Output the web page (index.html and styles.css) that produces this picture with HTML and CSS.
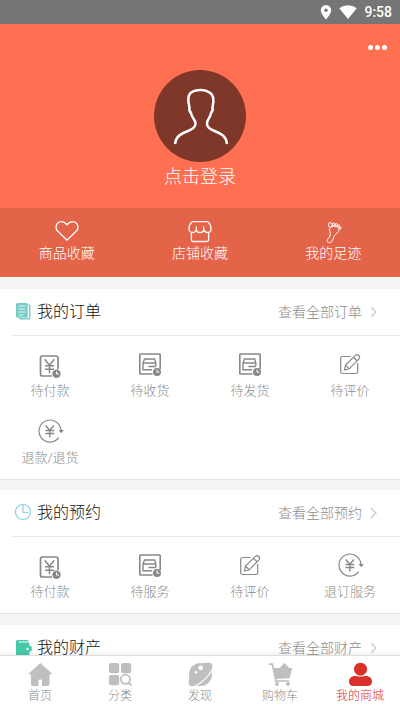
FILE: index.html
```html
<!DOCTYPE html>
<html lang="zh-CN">
<head>
<meta charset="utf-8">
<meta name="viewport" content="width=device-width, initial-scale=1">
<title>我的商城</title>
<link rel="stylesheet" href="styles.css">
</head>
<body>
<svg class="sprite" aria-hidden="true">
  <symbol id="i-pay" viewBox="0 0 28 28">
    <path d="M16 24H6.500a2 2 0 0 1-2-2V6a2 2 0 0 1 2-2h13.500a2 2 0 0 1 2 2v11" stroke-width="1.700"/>
    <path d="M8.800 7.200l4.700 6 4.700-6M13.500 13.200v8M9 13.700h9M9 17.200h9" stroke-width="1.500"/>
    <circle cx="20.500" cy="21.800" r="4.200" class="solid"/>
    <path d="M20.500 19.300v2.700h2.500" class="cut"/>
  </symbol>
  <symbol id="i-box" viewBox="0 0 28 28">
    <path d="M16.500 22H4.500a.7.700 0 0 1-.7-.7V2.700A.7.700 0 0 1 4.500 2h19a.7.700 0 0 1 .7.700V17" stroke-width="1.600"/>
    <path d="M19.800 14.500V11L18.700 7H8.600L7 11v6.700h9M7 11h12.800M12.500 14.500h7.300" stroke-width="1.400"/>
    <circle cx="21" cy="20" r="4" class="solid"/>
    <path d="M21 17.500v2.700h2.300" class="cut"/>
  </symbol>
  <symbol id="i-edit" viewBox="0 0 28 28">
    <path d="M14.500 4.500H6.500a1.800 1.800 0 0 0-1.800 1.800v13.400a1.800 1.800 0 0 0 1.800 1.800h13.400a1.800 1.800 0 0 0 1.800-1.800V11"/>
    <path d="M8.500 18l1-5L19.200 3.600a2.400 2.400 0 0 1 3.600 3.500L13.200 16.800zM17.500 5.300l3.600 3.500M9.500 13l3.700 3.800"/>
  </symbol>
  <symbol id="i-refund" viewBox="0 0 28 28">
    <path d="M25 11.500A11 11 0 1 0 22.800 18.700"/>
    <path d="M22.500 11h5.400l-2.700 3.200z" class="solid"/>
    <path d="M9.600 6.500l4.200 4.700L18 6.500M13.800 11v7.500M9.400 11.500h8.800M9.400 14.500h8.800" stroke-width="1.400"/>
  </symbol>
  <symbol id="i-chevron" viewBox="0 0 8 12"><path d="M1 1l5 5-5 5"/></symbol>
</svg>

<div class="app">
  <div class="status">
    <svg width="12" height="16" viewBox="0 0 12 16"><path fill="#fff" fill-rule="evenodd" d="M6 1a5.200 5.200 0 0 0-5.200 5.200C.8 10 6 15.500 6 15.500s5.200-5.500 5.200-9.300A5.200 5.200 0 0 0 6 1zm0 3.400a1.800 1.800 0 1 1 0 3.600 1.800 1.800 0 0 1 0-3.600z"/></svg>
    <svg width="18" height="16" viewBox="0 0 18 16"><path fill="#fff" d="M9 15L.3 4.300A14 14 0 0 1 9 1.200a14 14 0 0 1 8.700 3.100z"/></svg>
    <span>9:58</span>
  </div>

  <main class="content">
    <header class="hero">
      <div class="topbar">
        <button class="more" type="button" aria-label="更多"><i></i><i></i><i></i></button>
      </div>
      <a class="login" href="#">
        <span class="avatar">
          <svg viewBox="0 0 92 92"><path d="M21 74C22 66 27 63.500 34 61C39.500 58.500 41.500 57 41.500 53.500C41.500 49 37.500 48 37 43C35 41 35 39.500 35.500 37.500C34 32 33.500 27 36 23.500C39 20.500 43 20 47 20C51 20 53 20.700 55.500 22.500C60 24.500 60 31 58.500 37.500C59 39.500 59 41 57 43C56.500 48 53 49 53 53.500C53 57 55 58.500 60.500 61C67 63.500 72 66 73 74"/></svg>
        </span>
        <span class="login-text">点击登录</span>
      </a>
      <nav class="shortcuts">
        <a href="#">
          <svg viewBox="0 0 24 24"><path d="M12 21.200L2.600 12A5.600 5.600 0 0 1 1 8.200C1 5 3.400 2.700 6.300 2.700c2.500 0 4.200 1.200 5.700 3.200 1.500-2 3.200-3.200 5.700-3.200 2.900 0 5.300 2.300 5.300 5.500a5.600 5.600 0 0 1-1.600 3.800z"/></svg>
          <span>商品收藏</span>
        </a>
        <a href="#">
          <svg viewBox="0 0 24 24"><path d="M4.500 2.600h15c2.300 1.800 3.500 4.500 3.500 7.400 0 2.300-1.600 3.500-3.600 3.500s-3.700-1.500-3.700-3.500V7.500M15.700 10c0 2-1.600 3.500-3.700 3.500S8.300 12 8.300 10V7.500M8.300 10c0 2-1.700 3.500-3.700 3.500S1 12.300 1 10c0-2.900 1.200-5.600 3.500-7.400M3.400 13.500V21a1.500 1.500 0 0 0 1.500 1.500h14.200a1.500 1.500 0 0 0 1.500-1.500v-7.500"/></svg>
          <span>店铺收藏</span>
        </a>
        <a href="#">
          <svg viewBox="0 0 24 24" class="thin"><path d="M8.700 9.300C7.500 11.500 10.500 14 9 17c-1.700 3-3.500 3.800-2.500 5.800 1 1.500 3.500 1.200 4.800-1 1.500-2.500 1-4.800 3.600-6.700 2.300-1.700 3.600-3.300 2.900-5.600-.7-2.200-6.500-3.700-9.100-.2z"/><ellipse cx="9.300" cy="5.800" rx="1.900" ry="2.300"/><circle cx="12.500" cy="5.300" r="1.300"/><circle cx="15.200" cy="5.800" r="1.200"/><circle cx="17.500" cy="7" r="1.100"/><circle cx="19.200" cy="9" r="1"/></svg>
          <span>我的足迹</span>
        </a>
      </nav>
    </header>

    <section class="panel">
      <div class="panel-head">
        <svg class="mark" viewBox="0 0 22 22"><path fill="#78cbc6" d="M5.500 2h9a1.200 1.200 0 0 1 1.200 1.200v13.300H5.500A1.500 1.500 0 0 1 4 15V3.500A1.500 1.500 0 0 1 5.500 2z"/><path d="M16.300 4h.5a1 1 0 0 1 1 1v11.700a1 1 0 0 1-1 1H8.500a1.500 1.500 0 0 1-1.500-1" fill="none" stroke="#78cbc6" stroke-width="1.400"/><path d="M6.500 5h7M6.500 8h7M6.500 11h7M6.500 14h5" stroke="#e2f7f5"/></svg>
        <h2>我的订单</h2>
        <a href="#">查看全部订单<svg class="chevron"><use href="#i-chevron"/></svg></a>
      </div>
      <div class="grid">
        <a href="#"><svg><use href="#i-pay"/></svg><span>待付款</span></a>
        <a href="#"><svg><use href="#i-box"/></svg><span>待收货</span></a>
        <a href="#"><svg><use href="#i-box"/></svg><span>待发货</span></a>
        <a href="#"><svg><use href="#i-edit"/></svg><span>待评价</span></a>
        <a href="#"><svg><use href="#i-refund"/></svg><span>退款/退货</span></a>
      </div>
    </section>

    <section class="panel">
      <div class="panel-head">
        <svg class="mark" viewBox="0 0 22 22"><circle cx="11" cy="10" r="7.500" fill="none" stroke="#8dd0e4" stroke-width="1.200"/><path d="M11 2.500v8h5.500" fill="none" stroke="#8dd0e4" stroke-width="1.200"/></svg>
        <h2>我的预约</h2>
        <a href="#">查看全部预约<svg class="chevron"><use href="#i-chevron"/></svg></a>
      </div>
      <div class="grid">
        <a href="#"><svg><use href="#i-pay"/></svg><span>待付款</span></a>
        <a href="#"><svg><use href="#i-box"/></svg><span>待服务</span></a>
        <a href="#"><svg><use href="#i-edit"/></svg><span>待评价</span></a>
        <a href="#"><svg><use href="#i-refund"/></svg><span>退订服务</span></a>
      </div>
    </section>

    <section class="panel">
      <div class="panel-head">
        <svg class="mark" viewBox="0 0 22 22"><path fill="#45c9a9" d="M5.500 3H15a1.500 1.500 0 0 1 1.500 1v1.500a1.500 1.500 0 0 1 1 1.500v2h1.200a1 1 0 0 1 1 1v3.500a1 1 0 0 1-1 1h-1.200V17a1.500 1.500 0 0 1-1.500 1.500H5.500A1.500 1.500 0 0 1 4 17V4.500A1.500 1.500 0 0 1 5.500 3z"/><path d="M6.500 5h10" stroke="#fff"/><circle cx="15.500" cy="12" r="1.200" fill="#fff"/></svg>
        <h2>我的财产</h2>
        <a href="#">查看全部财产<svg class="chevron"><use href="#i-chevron"/></svg></a>
      </div>
    </section>
  </main>

  <nav class="tabs">
    <a href="#">
      <svg viewBox="0 0 24 24"><path d="M12.300 1L24 11.500c.3.500 0 .8-.5.800H21.500V22a2 2 0 0 1-2 2H14v-5.500a1 1 0 0 0-1-1h-1.500a1 1 0 0 0-1 1V24h-5.500a2 2 0 0 1-2-2v-9.700H1.200c-.6 0-.8-.4-.5-.8z"/></svg>
      <span>首页</span>
    </a>
    <a href="#">
      <svg viewBox="0 0 24 24"><rect x="1" y="1" width="10.200" height="10.200" rx="2"/><rect x="13" y="1" width="10.200" height="10.200" rx="2"/><rect x="1" y="13" width="10.200" height="10.200" rx="2"/><circle cx="17.400" cy="17.300" r="4.600" fill="none" stroke="#bfbfbf" stroke-width="1.800"/><path d="M20.700 20.700l2.800 2.800" stroke="#bfbfbf" stroke-width="2"/></svg>
      <span>分类</span>
    </a>
    <a href="#">
      <svg viewBox="0 0 24 24"><circle cx="12.500" cy="12.500" r="11.500"/><path d="M15 1.300C19 .6 22.500.8 23.500 1.500S24.500 6 23.500 10zM1.500 15C.3 19 .5 22.500 1.500 23.500S6 24.500 10 23.500z"/><path d="M24.500 7.500C20.500 14.500 14 21 6 24.500" fill="none" stroke="#fff" stroke-width="1.300"/><circle cx="12.800" cy="5.800" r="2.400" fill="#fff"/><circle cx="7.800" cy="10.200" r="1.300" fill="#fff"/></svg>
      <span>发现</span>
    </a>
    <a href="#">
      <svg viewBox="0 0 24 24"><path d="M1 2.200h3.300l3.300 14.800v2h13.600" fill="none" stroke="#bfbfbf" stroke-width="1.700"/><path d="M5.300 6H11.500L16.300 1l5 5h2.900l-2.700 10.200L7.500 17z"/><circle cx="9" cy="22" r="2"/><circle cx="20" cy="22" r="2"/></svg>
      <span>购物车</span>
    </a>
    <a href="#" class="active" aria-current="page">
      <svg viewBox="0 0 24 24"><circle cx="12.500" cy="7.200" r="6.500"/><path d="M7 14c1.500 0 3 .7 5.500.7S16.500 14 18 14c3.500 0 6 2.300 6 5.500S22 24 19.500 24h-14C3 24 1 22.700 1 19.500S3.500 14 7 14z"/></svg>
      <span>我的商城</span>
    </a>
  </nav>
</div>
</body>
</html>
```
FILE: styles.css
```css
* { box-sizing: border-box; }

body {
  margin: 0;
  font-family: Roboto, "Noto Sans CJK SC", sans-serif;
  font-weight: 300;
  color: #8c8c8c;
}

a { color: inherit; text-decoration: none; }
svg { display: block; flex: none; overflow: visible; }

.sprite { position: absolute; width: 0; height: 0; }

.app {
  display: flex;
  flex-direction: column;
  height: 100vh;
  background: #f4f4f4;
}

.status {
  display: flex;
  flex: none;
  align-items: center;
  justify-content: flex-end;
  gap: 7px;
  height: 24px;
  padding-right: 8px;
  background: #757575;
  color: #fff;
  font-size: 14px;
  font-weight: 500;
}

.content {
  flex: 1;
  min-height: 0;
  overflow-y: auto;
  scrollbar-width: none;
}

.hero {
  background: #ff7053;
  color: #fff;
}

.topbar {
  display: flex;
  align-items: center;
  justify-content: flex-end;
  height: 46px;
  padding-right: 12px;
}

.more {
  display: flex;
  gap: 2px;
  padding: 8px 1px;
  border: 0;
  background: none;
}

.more i {
  width: 5px;
  height: 5px;
  border-radius: 50%;
  background: #fff;
}

.login {
  display: flex;
  flex-direction: column;
  align-items: center;
  padding-bottom: 16px;
}

.avatar {
  width: 92px;
  height: 92px;
  border-radius: 50%;
  background: #7f372a;
}

.avatar svg {
  fill: none;
  stroke: #fff;
  stroke-width: 2.5;
}

.login-text {
  font-size: 18px;
  line-height: 30px;
}

.shortcuts {
  display: grid;
  grid-template-columns: repeat(3, 1fr);
  background: #e4644a;
}

.shortcuts a {
  display: flex;
  flex-direction: column;
  align-items: center;
  padding: 11px 0 14px;
  font-size: 14px;
  line-height: 20px;
}

.shortcuts svg {
  width: 24px;
  height: 24px;
  fill: none;
  stroke: #fff;
  stroke-width: 1.3;
}

.shortcuts .thin { stroke-width: 1; }

.panel {
  margin-top: 10px;
  background: #fff;
  border-bottom: 1px solid #e4e4e4;
}

.hero + .panel { margin-top: 12px; }
.panel:last-child { margin-top: 11px; }

.panel-head {
  display: flex;
  align-items: center;
  height: 47px;
  margin-left: 12px;
  padding-right: 22px;
  border-bottom: 1px solid #e9e9e9;
}

.mark {
  width: 22px;
  height: 22px;
  margin-right: 3px;
}

.panel-head h2 {
  margin: 0;
  color: #111;
  font-size: 16px;
  font-weight: 300;
  line-height: 24px;
}

.panel-head a {
  display: flex;
  align-items: center;
  gap: 8px;
  margin-left: auto;
  font-size: 14px;
  line-height: 22px;
}

.chevron {
  width: 8px;
  height: 12px;
  fill: none;
  stroke: #c8c8c8;
  stroke-width: 1.2;
}

.grid {
  display: grid;
  grid-template-columns: repeat(4, 1fr);
  padding-bottom: 9px;
}

.grid a {
  display: flex;
  flex-direction: column;
  align-items: center;
  padding: 16px 0 1px;
  font-size: 13px;
  line-height: 22px;
}

.grid svg {
  width: 28px;
  height: 28px;
  fill: none;
  stroke: #888;
  stroke-width: 1.2;
}

.solid { fill: #888; stroke: none; }
.cut { stroke: #fff; stroke-width: 1; }

.tabs {
  display: grid;
  flex: none;
  grid-template-columns: repeat(5, 1fr);
  position: relative;
  border-top: 1px solid #dedede;
  background: #fff;
  box-shadow: 0 -1px 6px rgba(0, 0, 0, .08);
}

.tabs a {
  display: flex;
  flex-direction: column;
  align-items: center;
  padding: 6px 0 4px;
  font-size: 12px;
  line-height: 20px;
}

.tabs svg {
  width: 24px;
  height: 24px;
  fill: #bfbfbf;
}

.tabs .active { color: #d9302b; }
.tabs .active svg { fill: #d9302b; }
```
